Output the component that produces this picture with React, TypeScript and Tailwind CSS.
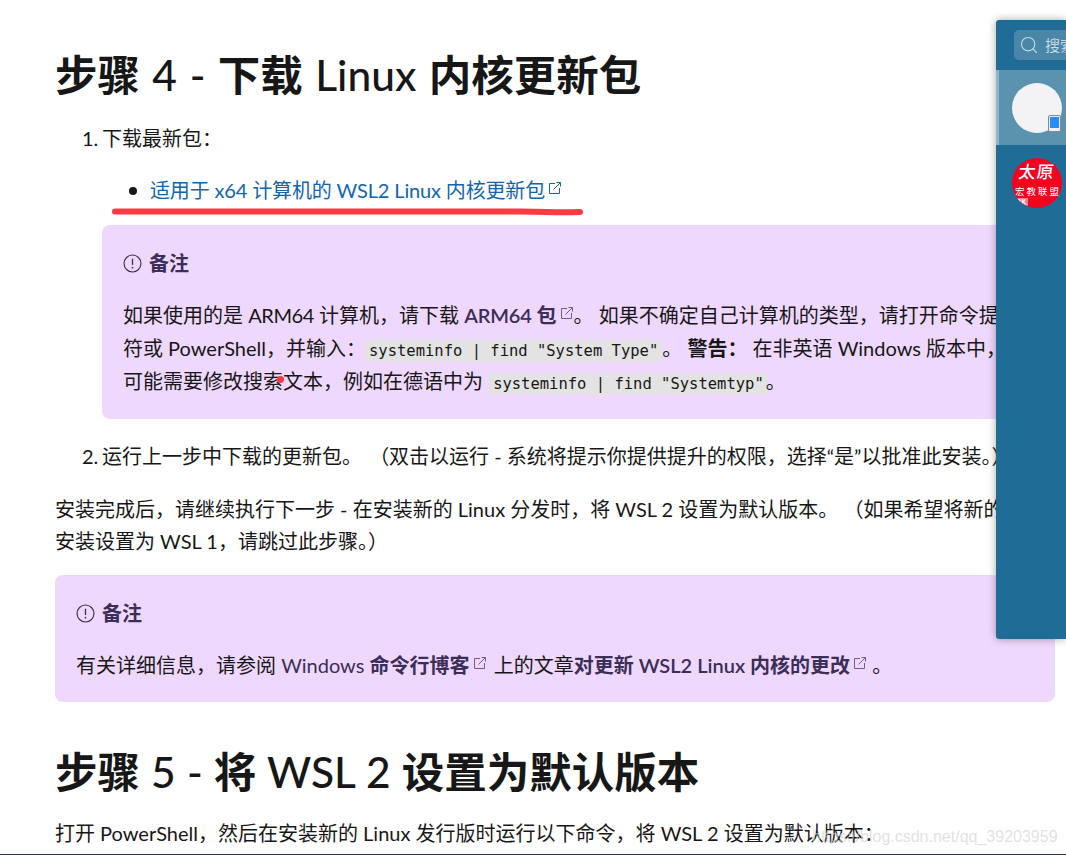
import { Search } from 'lucide-react';

const FONT = "font-['Lato','Noto_Sans_CJK_SC',sans-serif]";
const LINK = 'text-[#1065ae]';

function ExternalIcon({ className }: { className?: string }) {
  return (
    <svg viewBox="0 0 14 14" fill="none" stroke="currentColor" strokeWidth="1" className={`inline-block w-[14px] h-[14px] ml-[3px] align-[3px] ${className ?? ''}`}>
      <path d="M7 2.5H1.5v10h10V7" />
      <path d="M5.5 8.5 12.5 1.5" />
      <path d="M8.5 1.5h4v4" />
    </svg>
  );
}

function NoteIcon() {
  return (
    <svg viewBox="0 0 20 20" fill="none" stroke="currentColor" className="w-[19px] h-[19px] mr-[7px]">
      <circle cx="10" cy="10" r="8.9" strokeWidth="1.2" />
      <path d="M10 5v6.5" strokeWidth="1.4" />
      <circle cx="10" cy="14.4" r="0.9" fill="currentColor" stroke="none" />
    </svg>
  );
}

function NoteTitle() {
  return (
    <p className="flex items-center h-[33px] font-bold text-[#3b2e58]">
      <NoteIcon />
      备注
    </p>
  );
}

function Code({ children, className }: { children: string; className: string }) {
  return (
    <code className={`bg-[#e3e3e3] rounded-[3px] px-[4px] py-[2px] text-[15.5px] leading-none font-['DejaVu_Sans_Mono','Liberation_Mono',monospace] text-[#171717] ${className}`}>
      {children}
    </code>
  );
}

function Panel() {
  return (
    <aside className="absolute left-[996px] top-[20px] w-[70px] h-[619px] bg-[#1f6d96] rounded-l-[3px] overflow-hidden shadow-[0_0_8px_rgba(0,0,0,0.35)]">
      <div className="h-[50px] pl-[18px] pt-[10px]">
        <div className="flex items-center w-[90px] h-[30px] rounded-[5px] bg-[#4a86a8] pl-[5px] text-[#c5d8e3] text-[15px] whitespace-nowrap">
          <Search size={20} strokeWidth={1.4} className="mr-[6px] shrink-0" />
          搜索
        </div>
      </div>
      <div className="h-[75px] flex items-center pl-[13px] bg-[#5b92ad] border-l-[3px] border-[#8fb5c8]">
        <div className="relative w-[50px] h-[50px] rounded-full bg-[#f3f3f5]">
          <div className="absolute right-[1px] bottom-[1px] w-[13px] h-[17px] rounded-[2px] bg-[#eef1f3] border border-[#7b8a94] flex items-start p-[1px]">
            <div className="w-full h-[11px] bg-[#2a8cf7]" />
          </div>
        </div>
      </div>
      <div className="h-[75px] flex items-center pl-[16px]">
        <div className="relative w-[50px] h-[50px] rounded-full bg-[#f5001f] overflow-hidden text-white font-['Noto_Sans_CJK_SC',serif]">
          <div className="text-[17px] leading-[17px] font-medium text-center tracking-[1px] pt-[4px] -skew-x-6 whitespace-nowrap">太原</div>
          <div className="text-[9.5px] leading-[10px] text-center tracking-[2px] pl-[2px] whitespace-nowrap mt-[7px]">宏教联盟</div>
          <div className="absolute left-[3px] top-[40px] w-[13px] h-[8px] bg-[#f27e8e] text-[7px] leading-[8px] font-bold text-center">2K</div>
        </div>
      </div>
    </aside>
  );
}

function Latin({ children }: { children: string }) {
  return <span className="font-medium">{children}</span>;
}

export default function App() {
  return (
    <div className={`relative w-[1066px] h-[855px] overflow-hidden bg-white text-[20px] leading-[33px] text-[#171717] border-b border-[#1f3a4d] ${FONT}`}>
      <div className="px-[55px] w-[1055px] box-content whitespace-nowrap">
        {/* line cut off by the top of the window */}
        <p className="h-[3px] overflow-hidden text-[20px] leading-[4px] pl-[22px] text-[#999]">
          <span className="relative -top-[13px]">
            <span className="inline-block w-[126px]">下载最新版本</span>
            <span className={LINK}>(<span className="inline-block w-[146px] text-center">适用于 Windows</span>)</span>
          </span>
        </p>

        <h2 className="mt-[42px] mb-[17px] text-[42.5px] leading-[60px] font-bold text-[#171717] [word-spacing:2px]">步骤 <Latin>4 -</Latin> 下载 <Latin>Linux</Latin> 内核更新包</h2>

        <ol className="pl-[27px] mb-[18px]">
          <li className="h-[33px]"><span className="inline-block w-[20px]">1.</span>下载最新包：</li>
          <li className="h-[33px] mt-[19px] pl-[68px] relative">
            <span className="absolute left-[47px] top-[13px] w-[8px] h-[8px] rounded-full bg-[#171717]" />
            <a className={`${LINK} tracking-[-0.15px]`}>适用于 x64 计算机的 WSL2 Linux 内核更新包<ExternalIcon /></a>
          </li>
        </ol>

        <div className="ml-[47px] w-[953px] h-[194px] rounded-[8px] bg-[#efd8fd] px-[21px] pt-[22px] overflow-hidden">
          <NoteTitle />
          <div className="mt-[19px]">
            <p>如果使用的是 <span className="tracking-[-0.4px]">ARM64</span> 计算机，请下载 <a className="font-semibold text-[#3b2e58]"><span className="tracking-[-0.2px]">ARM64</span> 包<ExternalIcon className="font-normal opacity-70" /></a>。 如果不确定自己计算机的类型，请打开命令提示</p>
            <p>符或 PowerShell，并输入：<Code className="-ml-[1px]">systeminfo | find "System Type"</Code>。 <strong className="font-bold">警告：</strong> 在非英语 Windows 版本中，</p>
            <p>可能需要修改搜索文本，例如在德语中为 <Code className="ml-[1px] -mr-[2px]">systeminfo | find "Systemtyp"</Code>。</p>
          </div>
        </div>

        <p className="mt-[21px] pl-[27px]"><span className="inline-block w-[20px]">2.</span>运行上一步中下载的更新包。 <span className="ml-[2px]">（双击以运行 - 系统将提示你提供提升的权限，选择“是”以批准此安装。）</span></p>

        <div className="mt-[20px] leading-[32px]">
          <p>安装完成后，请继续执行下一步 - 在安装新的 Linux 分发时，将 WSL 2 设置为默认版本。 （如果希望将新的 Linux</p>
          <p>安装设置为 WSL 1，请跳过此步骤。）</p>
        </div>

        <div className="mt-[18px] w-[1000px] h-[127px] rounded-[8px] bg-[#efd8fd] px-[21px] pt-[22px]">
          <NoteTitle />
          <p className="mt-[19px]">有关详细信息，请参阅 <a className="text-[#3b2e58]">Windows <b className="font-semibold">命令行博客</b><ExternalIcon className="opacity-70 mr-[2px]" /></a> 上的文章<a className="text-[#3b2e58] font-semibold">对更新 WSL2 Linux 内核的更改<ExternalIcon className="font-normal opacity-70" /></a> 。</p>
        </div>

        <h2 className="mt-[40px] mb-[15px] text-[42.5px] leading-[60px] font-bold [word-spacing:0.6px]">步骤 <Latin>5 -</Latin> 将 <Latin>WSL 2</Latin> 设置为默认版本</h2>
        <p>打开 PowerShell，然后在安装新的 Linux 发行版时运行以下命令，将 WSL 2 设置为默认版本：</p>
      </div>

      {/* red pen marks on top of the screenshot */}
      <svg className="absolute left-[110px] top-[206px] w-[474px] h-[12px]" viewBox="0 0 474 12" fill="none">
        <path d="M5 5.5H410C440 5.5 440 7 470 6" stroke="#fd3a41" strokeWidth="6" strokeLinecap="round" />
      </svg>
      <span className="absolute left-[277px] top-[376px] w-[7px] h-[7px] rounded-full bg-[#fd3a41]" />

      <Panel />

      <span className="absolute left-[812px] top-[825px] text-[16px] leading-[24px] text-[#d5d5d5]/70 font-['Liberation_Sans',sans-serif] whitespace-nowrap">https://blog.csdn.net/qq_39203959</span>
    </div>
  );
}
